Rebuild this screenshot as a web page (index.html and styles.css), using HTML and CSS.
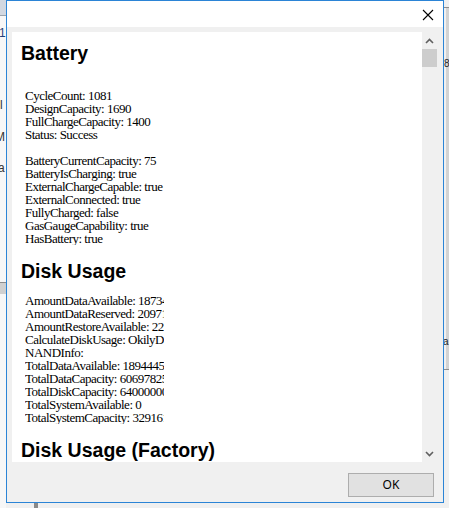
FILE: index.html
```html
<!DOCTYPE html>
<html>
<head>
<meta charset="utf-8">
<link rel="stylesheet" href="styles.css">
</head>
<body>
<div class="desk">
  <div class="bg-left">
    <div class="bl-top"></div>
    <span class="bl-t bl-t1">1</span>
    <span class="bl-t bl-t2">Fil</span>
    <span class="bl-t bl-t3">M</span>
    <span class="bl-t bl-t4">a</span>
    <div class="bl-band"></div>
  </div>
  <div class="bg-right">
    <div class="br-line br-line1"></div>
    <div class="br-strip"></div>
    <span class="br-t br-t1">8</span>
    <span class="br-t br-t2">a</span>
    <div class="br-line br-line2"></div>
  </div>
  <div class="bg-bottom-mark"></div>

  <div class="dialog">
    <div class="titlebar">
      <svg class="close" width="12" height="12" viewBox="0 0 12 12">
        <path d="M1 1 L11 11 M11 1 L1 11" stroke="#000" stroke-width="1.1" fill="none"/>
      </svg>
    </div>
    <div class="main">
      <div class="view">
        <h2 class="sec first">Battery</h2>
        <div class="kv">
          <div class="gap"></div>
          <div>CycleCount: 1081</div>
          <div>DesignCapacity: 1690</div>
          <div>FullChargeCapacity: 1400</div>
          <div>Status: Success</div>
          <div class="gap"></div>
          <div>BatteryCurrentCapacity: 75</div>
          <div>BatteryIsCharging: true</div>
          <div>ExternalChargeCapable: true</div>
          <div>ExternalConnected: true</div>
          <div>FullyCharged: false</div>
          <div>GasGaugeCapability: true</div>
          <div>HasBattery: true</div>
        </div>
        <h2 class="sec">Disk Usage</h2>
        <div class="kv">
          <div>AmountDataAvailable: 18734563328</div>
          <div>AmountDataReserved: 209715200</div>
          <div>AmountRestoreAvailable: 22548578304</div>
          <div>CalculateDiskUsage: OkilyDokily</div>
          <div>NANDInfo:</div>
          <div>TotalDataAvailable: 18944454656</div>
          <div>TotalDataCapacity: 60697825280</div>
          <div>TotalDiskCapacity: 64000000000</div>
          <div>TotalSystemAvailable: 0</div>
          <div>TotalSystemCapacity: 3291611136</div>
        </div>
        <h2 class="sec">Disk Usage (Factory)</h2>
        <div class="kv">
          <div>AmountDataAvailable: 18734563328</div>
        </div>
      </div>
      <div class="scrollbar">
        <div class="sb-btn">
          <svg width="9" height="6" viewBox="0 0 9 6"><path d="M1 5 L4.5 1.5 L8 5" stroke="#606060" stroke-width="1.6" fill="none"/></svg>
        </div>
        <div class="sb-thumb"></div>
        <div class="sb-track"></div>
        <div class="sb-btn">
          <svg width="9" height="6" viewBox="0 0 9 6"><path d="M1 1 L4.5 4.5 L8 1" stroke="#606060" stroke-width="1.6" fill="none"/></svg>
        </div>
      </div>
    </div>
    <div class="footer">
      <button class="ok">OK</button>
    </div>
  </div>
</div>
</body>
</html>
```

FILE: styles.css
```css
html, body {
  margin: 0;
  padding: 0;
}
body {
  width: 449px;
  height: 508px;
  overflow: hidden;
  background: #f0f0f0;
}
.desk {
  position: relative;
  width: 449px;
  height: 508px;
  overflow: hidden;
  background: #f0f0f0;
}

/* background window pieces */
.bg-left {
  position: absolute;
  left: 0;
  top: 0;
  width: 6px;
  height: 508px;
  overflow: hidden;
  background: #f7f7f7;
}
.bl-top {
  height: 15px;
  background: #d2d8e1;
  border-bottom: 1px solid #9aa3ad;
}
.bl-t {
  position: absolute;
  font-family: "Liberation Sans", sans-serif;
  font-size: 12px;
  line-height: 12px;
  color: #333;
}
.bl-t1 { top: 27px; left: -1px; color: #1f3f7a; }
.bl-t2 { top: 99px; left: -10px; }
.bl-t3 { top: 131px; left: -5px; }
.bl-t4 { top: 162px; left: -2px; }
.bl-band {
  position: absolute;
  left: 0;
  top: 282px;
  width: 6px;
  height: 11px;
  background: #d0d0d0;
  border-top: 1px solid #8c8c8c;
}
.bg-right {
  position: absolute;
  left: 443px;
  top: 0;
  width: 6px;
  height: 508px;
  overflow: hidden;
  background: #f0f0f0;
}
.br-line {
  position: absolute;
  left: 0;
  width: 6px;
  height: 1px;
  background: #8e8e8e;
}
.br-line1 { top: 7px; }
.br-line2 { top: 369px; }
.br-strip {
  position: absolute;
  left: 3px;
  top: 8px;
  width: 3px;
  height: 361px;
  background: #d3d3d3;
}
.br-t {
  position: absolute;
  font-family: "Liberation Sans", sans-serif;
  font-size: 10px;
  line-height: 10px;
  color: #222;
}
.br-t1 { top: 59px; left: 1px; }
.br-t2 { top: 337px; left: 0; }
.bg-bottom-mark {
  position: absolute;
  left: 34px;
  top: 503px;
  width: 4px;
  height: 5px;
  background: #8a8a8a;
}

/* dialog */
.dialog {
  position: absolute;
  left: 6px;
  top: 0;
  width: 438px;
  height: 503px;
  box-sizing: border-box;
  border: 1px solid #2b84d6;
  background: #f0f0f0;
  display: flex;
  flex-direction: column;
}
.titlebar {
  height: 26px;
  background: #ffffff;
  display: flex;
  justify-content: flex-end;
  align-items: flex-start;
  padding-right: 9px;
}
.close {
  display: block;
  margin-top: 8px;
}
.main {
  display: flex;
  padding: 5px 5px 0 5px;
}
.view {
  width: 410px;
  height: 430px;
  box-sizing: border-box;
  background: #ffffff;
  overflow: hidden;
  padding: 10px 0 0 9px;
}
.sec {
  margin: 15px 0 12px 0;
  font-family: "Liberation Sans", Arial, sans-serif;
  font-weight: bold;
  font-size: 19.5px;
  line-height: 22px;
  color: #000;
  white-space: nowrap;
}
.sec.first {
  margin-top: 0;
}
.kv {
  margin-left: 4px;
  width: 139px;
  overflow: hidden;
  white-space: nowrap;
  font-family: "Liberation Serif", "Times New Roman", serif;
  font-size: 13px;
  letter-spacing: -0.5px;
  line-height: 13px;
  color: #000;
}
.gap {
  height: 13px;
}
.scrollbar {
  width: 15px;
  height: 430px;
  display: flex;
  flex-direction: column;
  background: #f0f0f0;
}
.sb-btn {
  height: 17px;
  display: flex;
  align-items: center;
  justify-content: center;
}
.sb-thumb {
  height: 18px;
  background: #cdcdcd;
}
.sb-track {
  flex: 1;
}
.footer {
  display: flex;
  justify-content: flex-end;
  padding: 11px 9px 0 0;
}
.ok {
  width: 86px;
  height: 24px;
  box-sizing: border-box;
  margin: 0;
  padding: 0;
  background: #e1e1e1;
  border: 1px solid #adadad;
  border-radius: 0;
  font-family: "Noto Sans", "Open Sans", sans-serif;
  font-size: 12px;
  line-height: 20px;
  color: #000;
}
```
